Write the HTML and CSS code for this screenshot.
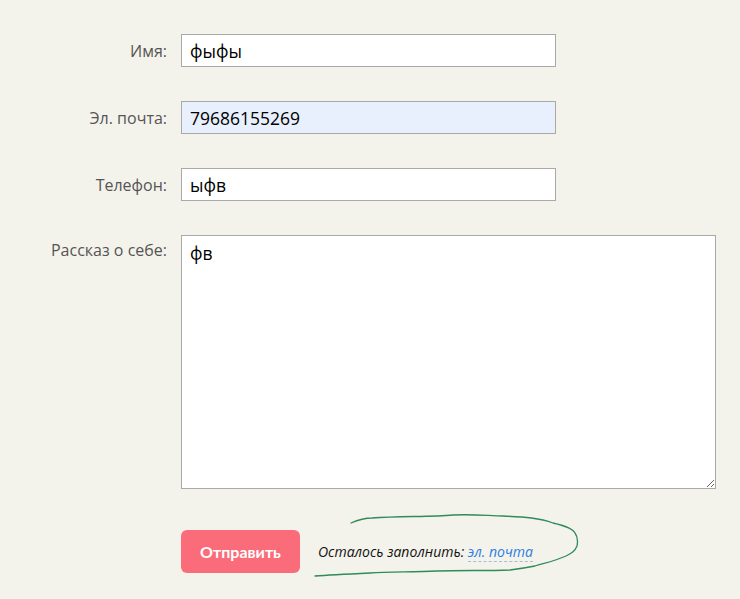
FILE: index.html
```html
<!DOCTYPE html>
<html lang="ru">
<head>
<meta charset="utf-8">
<link rel="stylesheet" href="styles.css">
</head>
<body>
<form class="form">
  <div class="row">
    <label class="label">Имя:</label>
    <input class="field" type="text" value="фыфы">
  </div>
  <div class="row">
    <label class="label">Эл. почта:</label>
    <input class="field field-autofill" type="text" value="79686155269">
  </div>
  <div class="row">
    <label class="label">Телефон:</label>
    <input class="field" type="text" value="ыфв">
  </div>
  <div class="row row-top">
    <label class="label label-top">Рассказ о себе:</label>
    <textarea class="area">фв</textarea>
  </div>
  <div class="row actions">
    <span class="label"></span>
    <button class="submit" type="button">Отправить</button>
    <span class="hint">Осталось заполнить: <a class="hint-link">эл. почта</a></span>
  </div>
</form>
<svg class="scribble" width="740" height="599" viewBox="0 0 740 599">
  <path d="M351 523 C358 520 364 518 372 518 C400 516 430 517 453 515 C475 514 490 516 503 516 C525 517 540 518 553 523 C566 526 573 529 575 533 C578 537 578 541 577 546 C575 551 572 553 566 556 C555 561 545 563 535 566 C525 568 518 569 510 570 C485 571 460 570 437 571 C410 572 390 572 370 573 C350 574 330 575 315 576" fill="none" stroke="#2e8b5a" stroke-width="1.3" stroke-linecap="round"/>
</svg>
</body>
</html>
```
FILE: styles.css
```css
html, body {
  margin: 0;
  padding: 0;
  background: #f4f3eb;
}
body {
  font-family: "Open Sans", "Liberation Sans", sans-serif;
  position: relative;
  width: 740px;
  height: 599px;
  overflow: hidden;
}
.form {
  padding-top: 34px;
  display: flex;
  flex-direction: column;
  gap: 34px;
}
.row {
  display: flex;
  align-items: center;
  gap: 14px;
  height: 33px;
}
.row-top {
  align-items: flex-start;
  height: 254px;
}
.label {
  width: 167px;
  flex: none;
  text-align: right;
  font-size: 16px;
  line-height: 20px;
  color: #555;
}
.label-top {
  padding-top: 5px;
}
.field {
  box-sizing: border-box;
  width: 375px;
  height: 33px;
  margin: 0;
  border: 1px solid #a9a9a9;
  background: #fff;
  padding: 0 8px;
  font-family: "Open Sans", "Liberation Sans", sans-serif;
  font-size: 17.5px;
  color: #000;
  outline: none;
}
.field-autofill {
  background: #e8f0fe;
}
.area {
  box-sizing: border-box;
  width: 535px;
  height: 254px;
  margin: 0;
  border: 1px solid #a9a9a9;
  background: #fff;
  padding: 5px 8px;
  font-family: "Open Sans", "Liberation Sans", sans-serif;
  font-size: 17.5px;
  color: #000;
  resize: both;
  outline: none;
}
.actions {
  margin-top: 7px;
  height: 43px;
  gap: 14px;
}
.submit {
  width: 119px;
  height: 43px;
  border: none;
  border-radius: 6px;
  background: #fa6c79;
  color: #fff;
  font-family: Lato, "Open Sans", sans-serif;
  font-weight: 700;
  font-size: 16px;
  cursor: pointer;
  margin: 0;
}
.hint {
  margin-left: 4px;
  font-style: italic;
  font-size: 14px;
  color: #111;
}
.hint-link {
  color: #2d7fe3;
  border-bottom: 1px dashed #a9bcd0;
  text-decoration: none;
}
.scribble {
  position: absolute;
  left: 0;
  top: 0;
  pointer-events: none;
}
```
